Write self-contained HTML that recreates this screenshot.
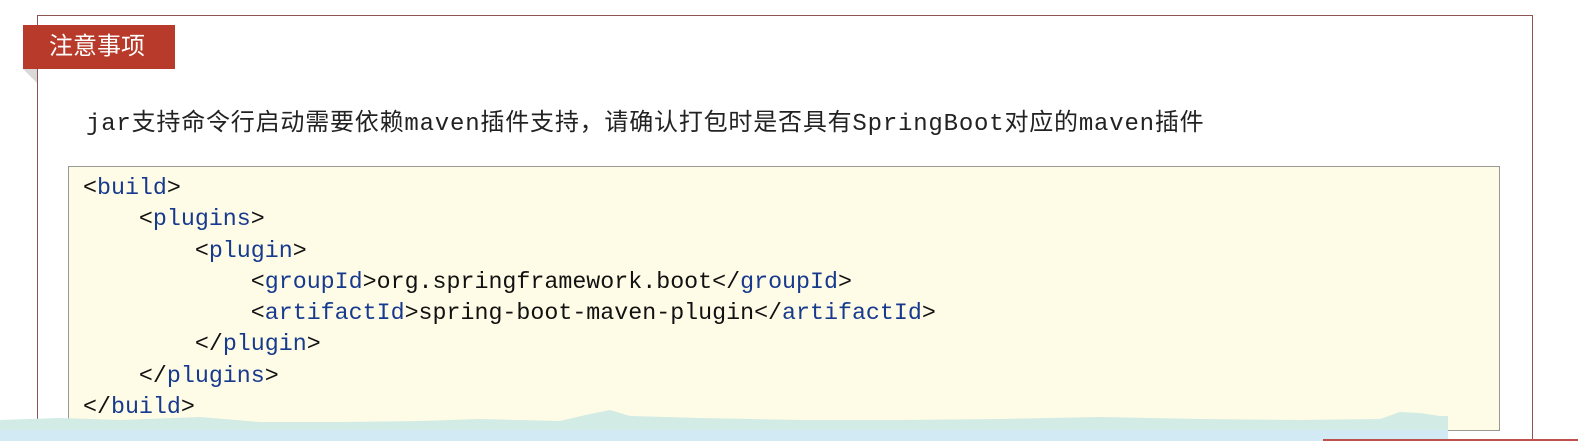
<!DOCTYPE html>
<html><head><meta charset="utf-8"><style>
html,body{margin:0;padding:0;width:1578px;height:441px;overflow:hidden;background:#fff;position:relative;font-family:"Liberation Mono","Noto Sans CJK SC",monospace;}
.outer{position:absolute;left:37px;top:15px;width:1496px;height:440px;border:1px solid #8e5454;box-sizing:border-box;}
.label{position:absolute;left:23px;top:25px;width:152px;height:44px;background:#b73a2a;color:#fff;font-family:"Liberation Sans","Noto Sans CJK SC",sans-serif;font-size:24px;line-height:44px;padding-left:26px;box-sizing:border-box;}
.fold{position:absolute;left:23px;top:69px;width:0;height:0;border-top:14px solid #d9d9d9;border-left:14px solid transparent;}
.note{position:absolute;left:86px;top:108px;font-size:24px;letter-spacing:0.8px;color:#222;white-space:nowrap;line-height:34px;}
.code{position:absolute;left:68px;top:166px;width:1432px;height:265px;background:#fefce6;border:1px solid #9a9a94;box-sizing:border-box;}
pre{position:absolute;left:83px;top:173px;margin:0;font-family:"Liberation Mono",monospace;font-size:23.3px;line-height:31.3px;color:#111;z-index:2;}
.t{color:#173a8e;}
.wave{position:absolute;left:0;top:400px;z-index:1;}
</style></head><body>
<div class="outer"></div>
<div class="code"></div>
<svg class="wave" width="1578" height="41" viewBox="0 400 1578 41">
<path d="M0 420 L60 418 L120 420 L200 417 L260 422 L340 422 L420 421 L480 419 L560 421 L590 414 L610 410 L630 416 L700 418 L800 420 L900 420 L1000 419 L1100 417 L1200 419 L1300 420 L1380 419 L1400 412 L1420 413 L1440 416 L1448 416 L1448 441 L0 441 Z" fill="#d2ebe5"/>
<rect x="0" y="430" width="1448" height="11" fill="#d2eaf4"/>
<rect x="1323" y="439" width="255" height="2" fill="#c0504d"/>
</svg>
<pre>&lt;<span class="t">build</span>&gt;
    &lt;<span class="t">plugins</span>&gt;
        &lt;<span class="t">plugin</span>&gt;
            &lt;<span class="t">groupId</span>&gt;org.springframework.boot&lt;/<span class="t">groupId</span>&gt;
            &lt;<span class="t">artifactId</span>&gt;spring-boot-maven-plugin&lt;/<span class="t">artifactId</span>&gt;
        &lt;/<span class="t">plugin</span>&gt;
    &lt;/<span class="t">plugins</span>&gt;
&lt;/<span class="t">build</span>&gt;</pre>
<div class="label">注意事项</div>
<div class="fold"></div>
<div class="note">jar支持命令行启动需要依赖maven插件支持，请确认打包时是否具有SpringBoot对应的maven插件</div>
</body></html>
